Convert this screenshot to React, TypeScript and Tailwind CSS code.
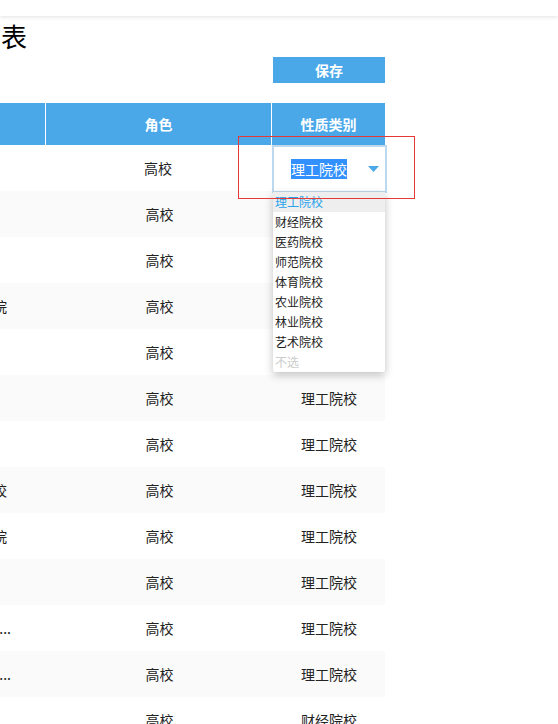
import { useState } from "react";

const FONT = { fontFamily: '"Microsoft YaHei", "Noto Sans CJK SC", "Noto Sans", sans-serif' };

const OPTIONS = ["理工院校", "财经院校", "医药院校", "师范院校", "体育院校", "农业院校", "林业院校", "艺术院校"];

type Row = { name: string; kind: string; pr: string };

// rows 2-5 of the last column sit under the open list
const ROWS: Row[] = [
  { name: "", kind: "理工院校", pr: "pr-[39px]" },
  { name: "", kind: "", pr: "pr-[39px]" },
  { name: "", kind: "", pr: "pr-[39px]" },
  { name: "工程技术学院", kind: "", pr: "pr-[39px]" },
  { name: "", kind: "", pr: "pr-[39px]" },
  { name: "", kind: "理工院校", pr: "pr-[39px]" },
  { name: "", kind: "理工院校", pr: "pr-[39px]" },
  { name: "职业技术学校", kind: "理工院校", pr: "pr-[39px]" },
  { name: "信息工程学院", kind: "理工院校", pr: "pr-[39px]" },
  { name: "", kind: "理工院校", pr: "pr-[39px]" },
  { name: "工程职业技术学...", kind: "理工院校", pr: "pr-[35px]" },
  { name: "电子科技职业学...", kind: "理工院校", pr: "pr-[35px]" },
  { name: "", kind: "财经院校", pr: "pr-[39px]" },
];

function KindSelect() {
  const [value] = useState(OPTIONS[0]);
  return (
    <div className="relative w-[115px] h-[48px] translate-x-[2px] translate-y-[1px]">
      <div className="w-full h-full border-2 border-[#bcd9ef] bg-white flex items-center pl-[17px] pr-[4px]">
        <span className="bg-[#3390ff] text-white leading-[20px]">{value}</span>
        <svg className="ml-auto mr-[2px]" width="11" height="6" viewBox="0 0 11 6">
          <path d="M0 0 L11 0 L5.5 6 Z" fill="#4aa8e9" />
        </svg>
      </div>
      {/* options list */}
      <div className="absolute left-[1px] top-[47px] w-[112px] bg-white shadow-[0_3px_8px_rgba(0,0,0,0.25)] rounded-b-[2px] z-10 text-[12px]">
        {OPTIONS.map((o, i) => (
          <div
            key={o}
            className={`h-[20px] leading-[20px] pl-[2px] ${i === 0 ? "bg-[#eeeeee] text-[#29a3ec]" : "text-[#222]"}`}
          >
            {o}
          </div>
        ))}
        <div className="h-[20px] leading-[20px] pl-[2px] text-[#cccccc]">不选</div>
      </div>
    </div>
  );
}

export default function App() {
  return (
    <div className="w-[558px] h-[724px] overflow-hidden bg-white text-[#222] relative" style={FONT}>
      <div className="h-[16px] bg-white shadow-[0_1px_4px_rgba(0,0,0,0.12)] relative z-20" />
      <div className="h-[37px] flex items-end text-[26px] leading-[34px] pl-[1px] text-black">表</div>
      <div className="flex mt-[4px] h-[26px]">
        <div className="w-[273px]" />
        <button className="w-[112px] h-[26px] bg-[#4aa8e9] text-white text-[14px] font-bold">保存</button>
      </div>
      <div className="mt-[20px] w-[385px]">
        {/* header */}
        <div className="flex h-[42px] bg-[#4aa8e9] text-white text-[14px] font-bold">
          <div className="w-[46px] border-r border-white" />
          <div className="w-[226px] border-r border-white flex items-center justify-center">角色</div>
          <div className="flex-1 flex items-center justify-center">性质类别</div>
        </div>
        {ROWS.map((r, i) => (
          <div key={i} className={`flex h-[46px] text-[14px] ${i % 2 === 1 ? "bg-[#fafafa]" : "bg-white"}`}>
            <div className={`w-[46px] flex justify-end items-center overflow-hidden ${r.pr}`}>
              <span className="shrink-0 whitespace-nowrap">{r.name}</span>
            </div>
            <div className="w-[227px] flex items-center justify-center">高校</div>
            <div className="flex-1 flex items-center justify-center">
              {i === 0 ? <KindSelect /> : r.kind}
            </div>
          </div>
        ))}
      </div>
      {/* annotation box */}
      <div className="absolute left-[238px] top-[136px] w-[177px] h-[63px] border border-[#e53935] z-30" />
    </div>
  );
}
